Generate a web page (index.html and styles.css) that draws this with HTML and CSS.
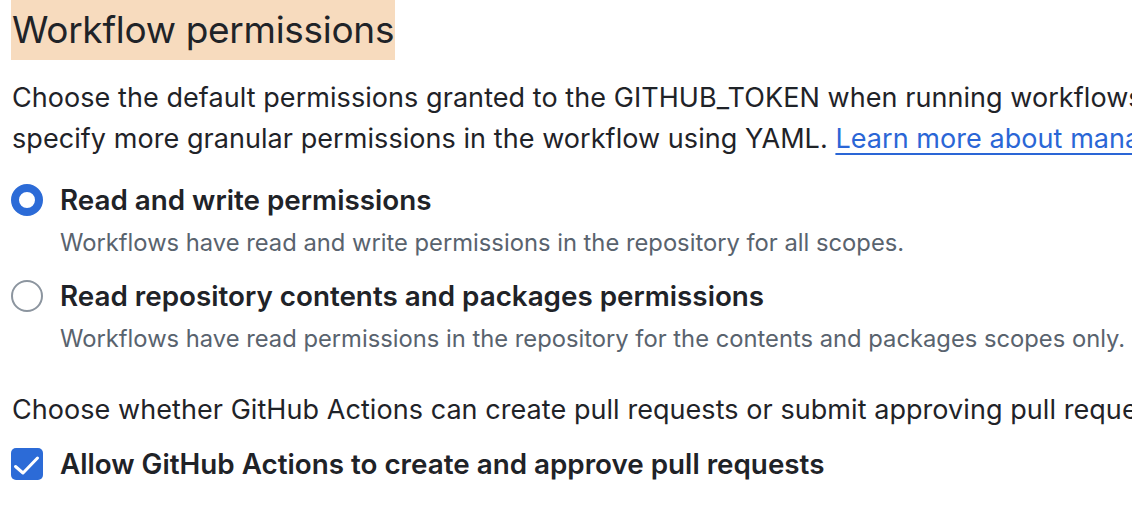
FILE: index.html
```html
<!DOCTYPE html>
<html lang="en">
<head>
<meta charset="utf-8">
<title>Workflow permissions</title>
<link rel="stylesheet" href="styles.css">
</head>
<body>
<main class="section">
  <h2 class="title"><span class="title-mark">Workflow permissions</span></h2>
  <p class="text">Choose the default permissions granted to the GITHUB_TOKEN when running workflows in this repository. You can<br>specify more granular permissions in the workflow using YAML. <a class="link" href="#">Learn more about managing permissions.</a></p>

  <div class="options">
    <label class="option">
      <span class="radio radio-on"></span>
      <span class="option-body">
        <span class="option-label">Read and write permissions</span>
        <span class="option-desc">Workflows have read and write permissions in the repository for all scopes.</span>
      </span>
    </label>
    <label class="option">
      <span class="radio"></span>
      <span class="option-body">
        <span class="option-label">Read repository contents and packages permissions</span>
        <span class="option-desc">Workflows have read permissions in the repository for the contents and packages scopes only.</span>
      </span>
    </label>
  </div>

  <p class="text text-second">Choose whether GitHub Actions can create pull requests or submit approving pull request reviews.</p>

  <label class="check-row">
    <span class="checkbox">
      <svg width="32" height="32" viewBox="0 0 32 32"><polyline points="4.5,18.5 12,25 26.5,10" fill="none" stroke="#fff" stroke-width="3" stroke-linecap="round" stroke-linejoin="round"/></svg>
    </span>
    <span class="option-label">Allow GitHub Actions to create and approve pull requests</span>
  </label>
</main>
</body>
</html>
```
FILE: styles.css
```css
html, body {
  margin: 0;
  padding: 0;
  background: #ffffff;
  overflow: hidden;
}
body {
  font-family: Inter, "Liberation Sans", sans-serif;
  color: #1f2328;
  white-space: nowrap;
}
.section {
  padding-left: 12px;
}
.title {
  margin: 0;
  font-size: 37px;
  font-weight: 400;
  line-height: 60px;
  height: 60px;
}
.title-mark {
  display: inline-block;
  background: #f7dbbe;
  margin-left: -1px;
  padding: 0 1px;
  letter-spacing: -0.3px;
}
.text {
  margin: 17px 0 0;
  font-size: 27px;
  line-height: 41px;
  letter-spacing: 0.06px;
}
.link {
  color: #2a66d6;
  text-decoration: underline;
  text-underline-offset: 5px;
  text-decoration-thickness: 2px;
}
.options {
  display: flex;
  flex-direction: column;
  gap: 14px;
  margin-top: 20px;
}
.option {
  display: flex;
  align-items: flex-start;
  gap: 17px;
  margin-left: -1px;
}
.radio {
  flex: none;
  box-sizing: border-box;
  width: 32px;
  height: 32px;
  margin-top: 5px;
  border-radius: 50%;
  border: 2px solid #8c959f;
  background: #fff;
}
.radio-on {
  border: 8.5px solid #2c6bd7;
}
.option-body {
  display: flex;
  flex-direction: column;
  gap: 4px;
}
.option-label {
  font-size: 27.8px;
  font-weight: 600;
  line-height: 42px;
}
.option-desc {
  font-size: 23.75px;
  line-height: 36px;
  color: #59636e;
}
.text-second {
  margin-top: 32px;
}
.check-row {
  display: flex;
  align-items: center;
  gap: 17px;
  margin-top: 13px;
  margin-left: -1px;
}
.checkbox {
  flex: none;
  display: flex;
  width: 32px;
  height: 32px;
  border-radius: 5px;
  background: #2c6bd7;
}
```
